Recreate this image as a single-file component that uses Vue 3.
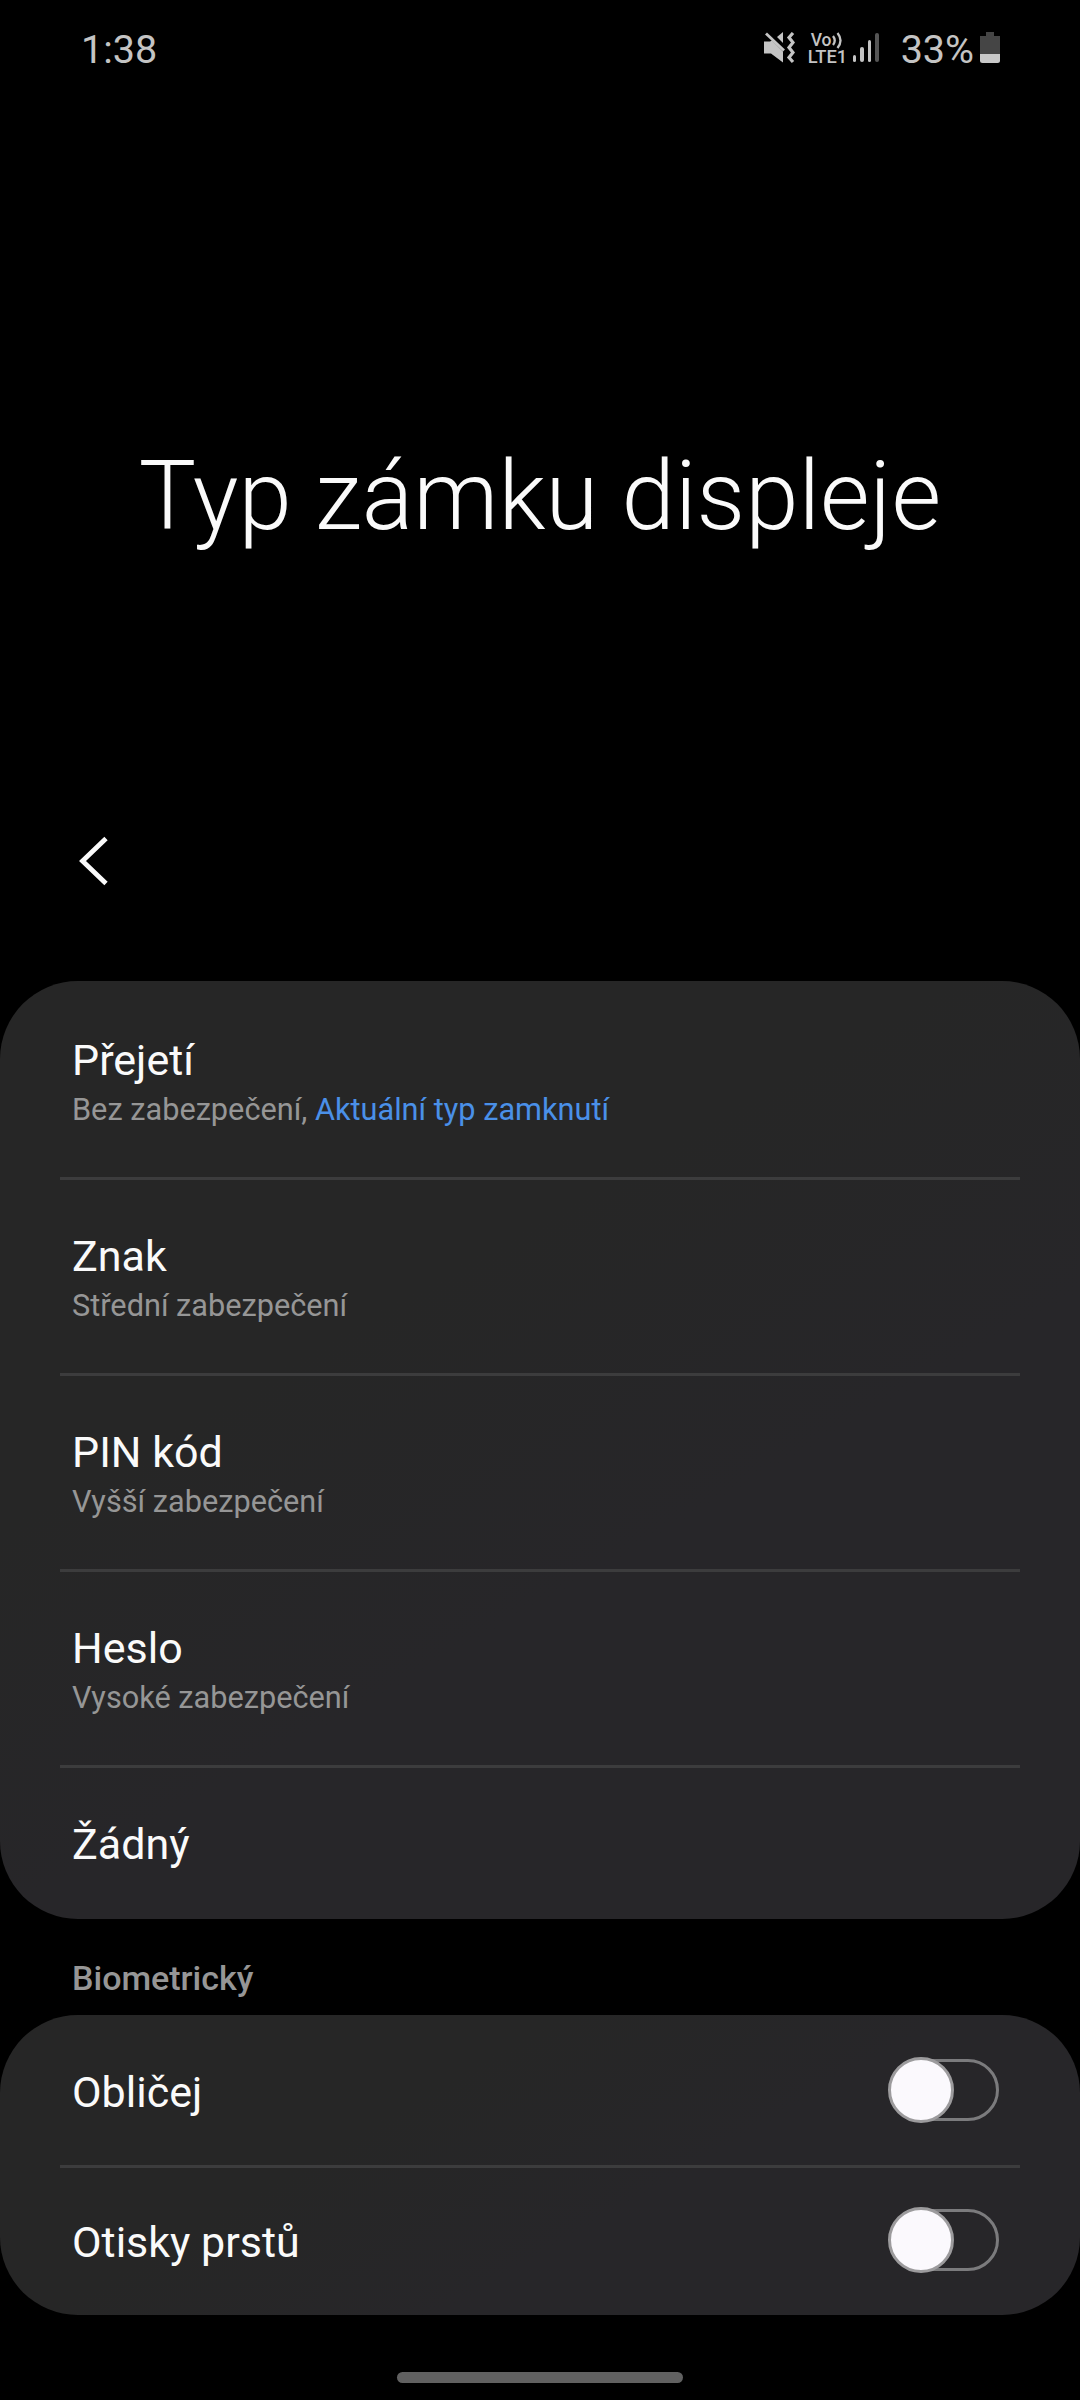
<template>
  <div class="screen">
    <header class="status-bar">
      <span class="time">1:38</span>
      <div class="indicators">
        <svg class="mute" width="32" height="32" viewBox="0 0 32 32">
          <path d="M1 9.500h6l2-1L20 19.500V30.500L8 21.500H1z" fill="#c4c4c4" />
          <path d="M20 0v11l-6-6z" fill="#c4c4c4" />
          <path d="M3 1.500l18 17" stroke="#c4c4c4" stroke-width="2.800" />
          <path d="M30 1l-4 4.500 4 5-4 5 4 5-4 5 4 4.500" fill="none" stroke="#c4c4c4" stroke-width="3.200" />
        </svg>
        <div class="network">
          <span class="volte">Vo<svg width="11" height="17" viewBox="0 0 11 17">
            <path d="M1 4q3.500 4.500 0 9M5.500 1q6 7.500 0 15" fill="none" stroke="#c4c4c4" stroke-width="2.300" />
          </svg></span>
          <span class="lte">LTE1</span>
        </div>
        <div class="signal">
          <i
            v-for="(height, index) in signalBars"
            :key="index"
            :class="{ empty: index === 3 }"
            :style="{ height: height + 'px' }"
          ></i>
        </div>
        <span class="percent">33%</span>
        <svg class="battery" width="20" height="31" viewBox="0 0 20 31">
          <path d="M6 0h8v4h6v18H0V4h6z" fill="#454545" />
          <path d="M0 22h20v6.500q0 2.500-2.500 2.500h-15Q0 31 0 28.500z" fill="#c8c8c8" />
        </svg>
      </div>
    </header>

    <h1 class="title">Typ zámku displeje</h1>

    <nav class="toolbar">
      <svg width="30" height="50" viewBox="0 0 30 50">
        <path d="M27 2.500L3.500 25 27 47.500" fill="none" stroke="#fafafa" stroke-width="4.800" />
      </svg>
    </nav>

    <section class="card">
      <div v-for="item in lockTypes" :key="item.name" class="row" :class="{ short: !item.level }">
        <div class="name">{{ item.name }}</div>
        <div v-if="item.level" class="level">
          {{ item.level }}<template v-if="item.current">, <span class="current">{{ item.current }}</span></template>
        </div>
      </div>
    </section>

    <h2 class="section-title">Biometrický</h2>

    <section class="card">
      <div v-for="item in biometrics" :key="item.name" class="row switch-row" @click="item.on = !item.on">
        <div class="name">{{ item.name }}</div>
        <div class="switch" :class="{ on: item.on }">
          <div class="thumb"></div>
        </div>
      </div>
    </section>

    <div class="home-handle"></div>
  </div>
</template>

<script setup>
import { ref } from 'vue'

const signalBars = [7, 15, 22, 29]

const lockTypes = [
  { name: 'Přejetí', level: 'Bez zabezpečení', current: 'Aktuální typ zamknutí' },
  { name: 'Znak', level: 'Střední zabezpečení' },
  { name: 'PIN kód', level: 'Vyšší zabezpečení' },
  { name: 'Heslo', level: 'Vysoké zabezpečení' },
  { name: 'Žádný' }
]

const biometrics = ref([
  { name: 'Obličej', on: false },
  { name: 'Otisky prstů', on: false }
])
</script>

<style>
body {
  margin: 0;
  background: #000;
}
</style>

<style scoped>
.screen {
  display: flex;
  flex-direction: column;
  width: 1080px;
  height: 2400px;
  overflow: hidden;
  background: #000;
  color: #fafafa;
  font-family: Roboto, sans-serif;
}

.status-bar {
  display: flex;
  justify-content: space-between;
  height: 96px;
  padding: 0 80px 0 81px;
  box-sizing: border-box;
  color: #c4c4c4;
}

.time,
.percent {
  font-size: 39.5px;
  line-height: 48px;
  padding-top: 26px;
}

.indicators {
  display: flex;
  align-items: flex-start;
}

.mute {
  margin-top: 32px;
}

.network {
  display: flex;
  flex-direction: column;
  width: 39px;
  margin: 32px 0 0 13px;
  font-weight: 500;
}

.volte {
  display: flex;
  padding-left: 3px;
  font-size: 17.5px;
  line-height: 16px;
  height: 16px;
}

.volte svg {
  flex: none;
}

.lte {
  font-size: 18.3px;
  line-height: 18px;
}

.signal {
  display: flex;
  align-items: flex-end;
  gap: 4px;
  height: 29px;
  margin: 33px 22px 0 6px;
}

.signal i {
  width: 3.5px;
  border-radius: 2px;
  background: #c4c4c4;
}

.signal .empty {
  background: #555;
}

.battery {
  margin: 32px 0 0 6px;
}

.title {
  margin: 343px 0 0;
  height: 114px;
  font-size: 96px;
  font-weight: 300;
  line-height: 114px;
  text-align: center;
}

.toolbar {
  flex: none;
  height: 428px;
  box-sizing: border-box;
  padding: 283px 0 0 79px;
}

.card {
  flex: none;
  border-radius: 78px;
  background: linear-gradient(150deg, #262626 35%, #272629 60%);
}

.row {
  height: 196px;
  box-sizing: border-box;
  padding: 54px 72px 0;
  position: relative;
}

/* inset divider between rows */
.row + .row::before {
  content: '';
  position: absolute;
  top: 0;
  left: 60px;
  right: 60px;
  height: 3px;
  background: #3c3c3d;
}

.row.short {
  height: 154px;
}

.name {
  font-size: 43px;
  line-height: 50px;
}

.level {
  margin-top: 5px;
  font-size: 30.7px;
  line-height: 40px;
  color: #969696;
}

.current {
  color: #4a90e8;
}

.section-title {
  flex: none;
  height: 96px;
  margin: 0;
  padding: 39px 72px 0;
  box-sizing: border-box;
  font-size: 34px;
  font-weight: 500;
  line-height: 40px;
  color: #969696;
}

.switch-row {
  display: flex;
  justify-content: space-between;
  height: 150px;
  padding: 0 81px 0 72px;
}

.switch-row .name {
  padding-top: 52px;
}

.switch {
  width: 110px;
  height: 62px;
  box-sizing: border-box;
  margin-top: 44px;
  border: 3px solid #7b7b7d;
  border-radius: 31px;
}

.thumb {
  width: 66px;
  height: 66px;
  box-sizing: border-box;
  margin: -5px 0 0 -4px;
  border: 3px solid #9c9b9d;
  border-radius: 50%;
  background: #fbf9fd;
}

.switch.on .thumb {
  margin-left: 42px;
}

.home-handle {
  flex: none;
  width: 286px;
  height: 11px;
  margin: 57px auto 0;
  border-radius: 6px;
  background: #616161;
}
</style>
